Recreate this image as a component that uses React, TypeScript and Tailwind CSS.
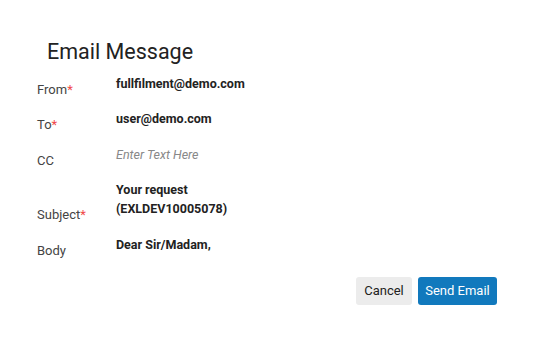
import React from 'react';

const Label: React.FC<{ text: string; required?: boolean }> = ({ text, required }) => (
  <div className="w-[79px] shrink-0 text-[13px] leading-[19px] text-[#444]">
    {text}
    {required && <span className="text-[#f04848]">*</span>}
  </div>
);

export default function App() {
  return (
    <div className="w-[534px] h-[351px] bg-white font-['Roboto',sans-serif]">
      <div className="pt-[38px] px-[37px]">
        <h2 className="ml-[10px] text-[21.5px] leading-[28px] text-[#222] mb-[7.5px]">Email Message</h2>

        <div className="flex flex-col gap-[10.5px]">
          <div className="flex items-end">
            <Label text="From" required />
            <div className="pb-[6px] text-[12.5px] leading-[19px] font-bold text-[#222]">fullfilment@demo.com</div>
          </div>
          <div className="flex items-end">
            <Label text="To" required />
            <div className="pb-[6px] text-[12.5px] leading-[19px] font-bold text-[#222]">user@demo.com</div>
          </div>
          <div className="flex items-end">
            <Label text="CC" />
            <div className="pb-[6px] text-[12.5px] leading-[19px] italic text-[#888]">Enter Text Here</div>
          </div>
          <div className="flex items-end">
            <Label text="Subject" required />
            <div className="w-[160px] pb-[6px] text-[12.5px] leading-[19px] font-bold text-[#222]">
              Your request (EXLDEV10005078)
            </div>
          </div>
          <div className="flex items-end">
            <Label text="Body" />
            <div className="pb-[6px] text-[12.5px] leading-[19px] font-bold text-[#222]">Dear Sir/Madam,</div>
          </div>
        </div>

        <div className="mt-[17.5px] flex justify-end gap-[6px]">
          <button className="h-[28px] w-[56px] rounded-[3px] bg-[#ececec] text-[13px] text-[#222]">Cancel</button>
          <button className="h-[28px] w-[79px] rounded-[3px] bg-[#1179bd] text-[13px] text-white">Send Email</button>
        </div>
      </div>
    </div>
  );
}
